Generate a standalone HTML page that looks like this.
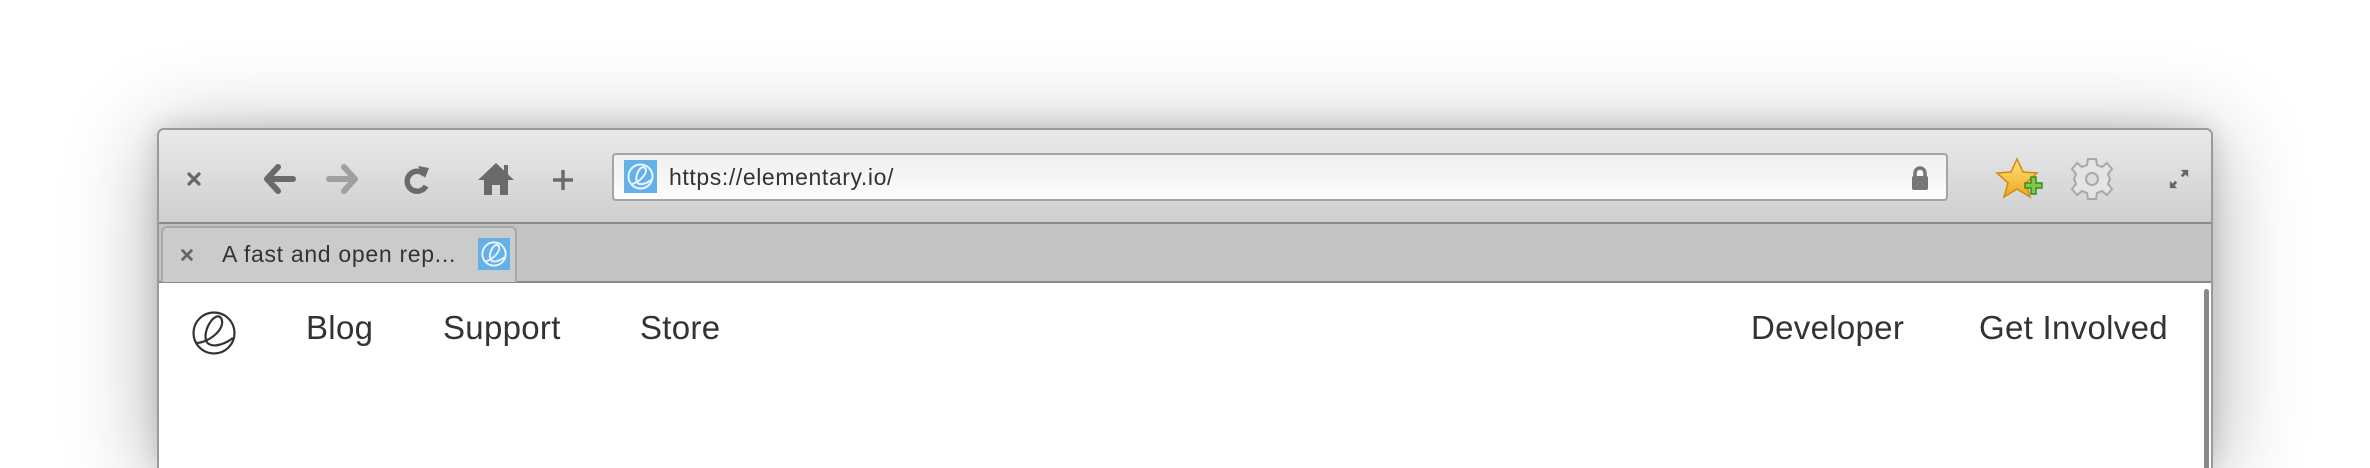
<!DOCTYPE html>
<html><head><meta charset="utf-8"><style>
*{margin:0;padding:0;box-sizing:border-box}
body{width:2370px;height:431px;background:#fff;overflow:hidden;position:relative;font-family:"Liberation Sans",sans-serif}
.win{position:absolute;left:157px;top:128px;width:2056px;height:340px;border:2px solid #9a9a9a;border-bottom:none;border-radius:7px 7px 0 0;box-shadow:0 10px 90px rgba(0,0,0,.32),0 0 24px rgba(0,0,0,.14);background:#fff;overflow:hidden}
.tb{position:absolute;left:0;top:0;right:0;height:94px;background:linear-gradient(#e9e9e9,#cfcfcf);border-bottom:2px solid #8c8c8c}
.tabs{position:absolute;left:0;top:94px;right:0;height:59px;background:#c3c3c3;border-bottom:2px solid #8a8a8a}
.tab{position:absolute;left:2px;top:2px;width:356px;height:56px;background:#cbcbcb;border:2px solid #a9a9a9;border-bottom:none;border-radius:6px 6px 0 0}
.ic{position:absolute}
.url{position:absolute;left:453px;top:23px;width:1336px;height:48px;border:2px solid #a4a4a4;border-radius:4px;background:linear-gradient(#f0f0f0,#fcfcfc)}
.t{position:absolute;white-space:nowrap;color:#333}
.nav{font-size:33px;color:#333;top:179px;letter-spacing:0.3px}
.sb{position:absolute;left:2045px;top:159px;width:5px;height:200px;background:#8a8a8a;border-radius:3px}
</style></head><body>
<div class="win">
<div class="tb">
 <svg class="ic" style="left:27px;top:41px" width="16" height="16" viewBox="0 0 16 16"><path d="M3 3L13 13M13 3L3 13" stroke="#666" stroke-width="3.2" stroke-linecap="round"/></svg>
 <svg class="ic" style="left:104px;top:34px" width="34" height="30" viewBox="0 0 34 30"><path d="M15 3L4 15L15 27M5 15H30" stroke="#6a6a6a" stroke-width="6" fill="none" stroke-linecap="round" stroke-linejoin="round"/></svg>
 <svg class="ic" style="left:166px;top:34px" width="34" height="30" viewBox="0 0 34 30"><path d="M19 3L30 15L19 27M29 15H4" stroke="#a0a0a0" stroke-width="6" fill="none" stroke-linecap="round" stroke-linejoin="round"/></svg>
 <svg class="ic" style="left:244px;top:33px" width="30" height="32" viewBox="0 0 30 32"><path d="M22 12A10 10 0 1 0 23 23" stroke="#6a6a6a" stroke-width="5.5" fill="none"/><path d="M15 3L26 5L22 15Z" fill="#6a6a6a"/></svg>
 <svg class="ic" style="left:318px;top:32px" width="38" height="34" viewBox="0 0 38 34"><path d="M19 1L37 18H31V33H23V23H15V33H7V18H1Z" fill="#6a6a6a"/><rect x="27" y="3" width="4" height="9" fill="#6a6a6a"/></svg>
 <svg class="ic" style="left:392px;top:38px" width="24" height="24" viewBox="0 0 24 24"><path d="M12 2V22M2 12H22" stroke="#6a6a6a" stroke-width="3.5"/></svg>
 <div class="url">
  <svg class="ic" style="left:10px;top:5px" width="33" height="33" viewBox="0 0 33 33"><rect width="33" height="33" fill="#64b0e8"/><circle cx="16.5" cy="16.5" r="12" stroke="#e8f4ff" stroke-width="2" fill="none"/><path d="M8 24C16 22 25 12 21 8C17 4 10 16 13 22C15 26 22 24 27 20" stroke="#e8f4ff" stroke-width="2" fill="none"/></svg>
  <div class="t" style="left:55px;top:9px;font-size:23px;letter-spacing:0.6px;color:#333">https://elementary.io/</div>
  <svg class="ic" style="left:1296px;top:10px" width="20" height="26" viewBox="0 0 20 26"><path d="M5 12V8A5 5 0 0 1 15 8V12" stroke="#777" stroke-width="3.5" fill="none"/><rect x="2" y="11" width="16" height="14" rx="2" fill="#777"/></svg>
 </div>
 <svg class="ic" style="left:1836px;top:26px" width="48" height="48" viewBox="0 0 48 48"><defs><linearGradient id="g" x1="0" y1="0" x2="0" y2="1"><stop offset="0" stop-color="#ffe27a"/><stop offset="1" stop-color="#f0a820"/></linearGradient></defs><path d="M22 3L28 16L42 17L31 27L35 41L22 33L9 41L13 27L2 17L16 16Z" fill="url(#g)" stroke="#d08a10" stroke-width="1.5"/><path d="M30 27H36V21H41V27H47V32H41V38H36V32H30Z" fill="#7fc84a" stroke="#3e8a1e" stroke-width="1.5"/></svg>
 <svg class="ic" style="left:1911px;top:27px" width="44" height="44" viewBox="0 0 44 44"><g transform="translate(22 22)" fill="#e4e4e4" stroke="#a8a8a8" stroke-width="2"><path d="M-4 -20H4L5 -14L10 -12L15 -16L20 -10L16 -5L18 0L16 5L20 10L15 16L10 12L5 14L4 20H-4L-5 14L-10 12L-15 16L-20 10L-16 5L-18 0L-16 -5L-20 -10L-15 -16L-10 -12L-5 -14Z"/><circle r="6" fill="#ddd"/></g></svg>
 <svg class="ic" style="left:2009px;top:38px" width="22" height="22" viewBox="0 0 24 24"><path d="M14 2H22V10ZM10 22H2V14Z" fill="#666"/><path d="M19 5L15 9M9 15L5 19" stroke="#666" stroke-width="3"/></svg>
</div>
<div class="tabs">
 <div class="tab">
  <svg class="ic" style="left:17px;top:20px" width="14" height="14" viewBox="0 0 16 16"><path d="M3 3L13 13M13 3L3 13" stroke="#666" stroke-width="3.2" stroke-linecap="round"/></svg>
  <div class="t" style="left:59px;top:13px;font-size:23px;letter-spacing:0.7px;color:#333">A fast and open rep...</div>
  <svg class="ic" style="left:315px;top:10px" width="32" height="32" viewBox="0 0 33 33"><rect width="33" height="33" fill="#64b0e8"/><circle cx="16.5" cy="16.5" r="12" stroke="#e8f4ff" stroke-width="2" fill="none"/><path d="M8 24C16 22 25 12 21 8C17 4 10 16 13 22C15 26 22 24 27 20" stroke="#e8f4ff" stroke-width="2" fill="none"/></svg>
 </div>
</div>
<svg class="ic" style="left:32px;top:180px" width="46" height="46" viewBox="0 0 46 46"><circle cx="23" cy="23" r="20.5" stroke="#333" stroke-width="2.2" fill="none"/><path d="M5 33C18 33 36 18 30 8C25 1 12 18 15 30C17 38 30 37 42 28" stroke="#333" stroke-width="2.2" fill="none"/></svg>
<div class="t nav" style="left:147px">Blog</div>
<div class="t nav" style="left:284px">Support</div>
<div class="t nav" style="left:481px">Store</div>
<div class="t nav" style="left:1592px">Developer</div>
<div class="t nav" style="left:1820px">Get Involved</div>
<div class="sb"></div>
</div>
</body></html>
